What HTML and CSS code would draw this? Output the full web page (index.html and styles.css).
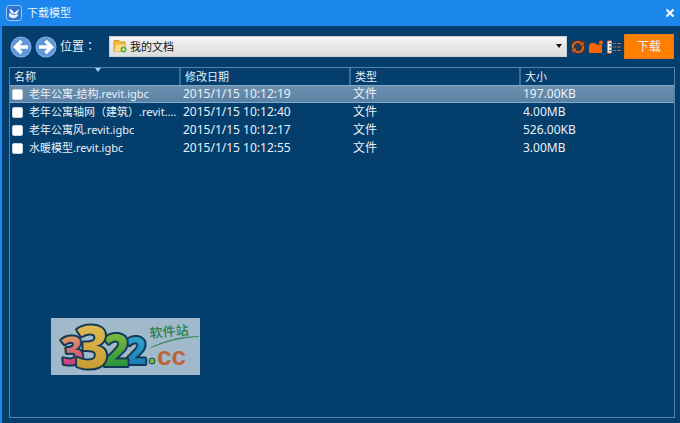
FILE: index.html
```html
<!DOCTYPE html>
<html lang="zh-CN">
<head>
<meta charset="utf-8">
<title>下载模型</title>
<link rel="stylesheet" href="styles.css">
</head>
<body>
<div class="window">
  <header class="titlebar">
    <svg class="app-icon" viewBox="0 0 16 16" aria-hidden="true">
      <rect x=".5" y=".5" width="15" height="15" rx="3" fill="#2f74cc" stroke="#9cc9f5"/>
      <path d="M3 3.500l3.500 2L8 8l5.500-4-3 5.500L5 8z" fill="#fff"/>
      <path d="M3 8l5 2 4.500-.5c-1 4-7.500 5-9.500 1.500z" fill="#e6f2fd"/>
    </svg>
    <h1 class="title">下载模型</h1>
    <button class="close" type="button" aria-label="关闭">
      <svg viewBox="0 0 10 10"><path d="M1.500 1.500l7 7M8.500 1.500l-7 7" stroke="#fff" stroke-width="2"/></svg>
    </button>
  </header>

  <main class="content">
    <div class="toolbar">
      <button class="nav" type="button" aria-label="后退">
        <svg viewBox="0 0 22 22"><circle cx="11" cy="11" r="10.500" fill="#7fb0e6"/><circle cx="11" cy="11" r="9.500" fill="#5f97d8"/><path d="M18 11H6M11.500 5l-6 6 6 6" fill="none" stroke="#fff" stroke-width="3.500"/></svg>
      </button>
      <button class="nav" type="button" aria-label="前进">
        <svg viewBox="0 0 22 22"><circle cx="11" cy="11" r="10.500" fill="#7fb0e6"/><circle cx="11" cy="11" r="9.500" fill="#5f97d8"/><path d="M4 11H16M10.500 5l6 6-6 6" fill="none" stroke="#fff" stroke-width="3.500"/></svg>
      </button>
      <label class="location-label" for="location">位置<span lang="zh-TW">：</span></label>
      <div class="location">
        <select id="location" class="location-select"><option>我的文档</option></select>
        <svg class="folder" viewBox="0 0 14 14" aria-hidden="true">
          <path d="M1 1.500h5l1 1.500h5v9H1z" fill="#f0b93f" stroke="#d4962a"/>
          <path d="M3 5.500h9l-1.500 6.500H1.500z" fill="#fbdc84"/>
          <circle cx="10.500" cy="10.500" r="3" fill="#5cae3c"/>
          <path d="M9 10.500h3M10.500 9v3" stroke="#dff5d2"/>
        </svg>
        <svg class="arrow" viewBox="0 0 6 4" aria-hidden="true"><path d="M0 0h6L3 4z" fill="#111"/></svg>
      </div>
      <div class="tools">
        <button class="tool" type="button" aria-label="刷新">
          <svg viewBox="0 0 14 14"><rect width="14" height="14" fill="#30384e"/><path d="M2 8A5 5 0 0 1 10.500 3.500M12 6A5 5 0 0 1 3.500 10.500" fill="none" stroke="#f26508" stroke-width="1.800"/><path d="M12.500 1.500V5.500H8.500zM1.500 12.500v-4h4z" fill="#f26508"/></svg>
        </button>
        <button class="tool" type="button" aria-label="新建文件夹">
          <svg viewBox="0 0 14 14"><path d="M0 5l2-2h4l1.500 1.500H13V13H0z" fill="#f96400"/><circle cx="12" cy="2.500" r="2" fill="#f96400"/></svg>
        </button>
        <button class="tool" type="button" aria-label="列表视图">
          <svg viewBox="0 0 14 14"><path d="M.5 1h4v12h-4z" fill="#fff1e4" stroke="#f28032"/><path d="M2 3h2v1H2zM2 6.500h2v1H2zM2 10h2v1H2z" fill="#174f80"/><path d="M6 3.500h3m1 0h4M6 7h3m1 0h4M6 10.500h3m1 0h4" stroke="#d4652a" stroke-width="1.200"/></svg>
        </button>
      </div>
      <button class="download" type="button">下载</button>
    </div>

    <section class="panel">
      <table class="files">
        <thead>
          <tr><th scope="col">名称<svg class="sort" viewBox="0 0 6 4" aria-hidden="true"><path d="M0 0h6L3 4z" fill="#9bd0ee"/></svg></th><th scope="col">修改日期</th><th scope="col">类型</th><th scope="col">大小</th></tr>
        </thead>
        <tbody>
          <tr class="selected"><td><label class="file"><input type="checkbox"><span class="name">老年公寓-结构.revit.igbc</span></label></td><td>2015/1/15 10:12:19</td><td>文件</td><td>197.00KB</td></tr>
          <tr><td><label class="file"><input type="checkbox"><span class="name">老年公寓轴网（建筑）.revit.igbc</span></label></td><td>2015/1/15 10:12:40</td><td>文件</td><td>4.00MB</td></tr>
          <tr><td><label class="file"><input type="checkbox"><span class="name">老年公寓风.revit.igbc</span></label></td><td>2015/1/15 10:12:17</td><td>文件</td><td>526.00KB</td></tr>
          <tr><td><label class="file"><input type="checkbox"><span class="name">水暖模型.revit.igbc</span></label></td><td>2015/1/15 10:12:55</td><td>文件</td><td>3.00MB</td></tr>
        </tbody>
      </table>
    </section>
  </main>

  <svg class="watermark" viewBox="0 0 149 57" role="img" aria-label="3322.cc 软件站">
    <defs>
      <linearGradient id="pink" x1="0" y1="0" x2="0" y2="1"><stop offset=".3" stop-color="#dc9464"/><stop offset=".8" stop-color="#c83c86"/></linearGradient>
      <linearGradient id="gold" x1="0" y1="0" x2="0" y2="1"><stop offset=".2" stop-color="#dfbc55"/><stop offset=".8" stop-color="#c99c32"/></linearGradient>
      <linearGradient id="green" x1="0" y1="0" x2="0" y2="1"><stop offset=".2" stop-color="#86bd40"/><stop offset=".9" stop-color="#188c3c"/></linearGradient>
      <linearGradient id="blue" x1="0" y1="0" x2="0" y2="1"><stop offset=".2" stop-color="#35a7cf"/><stop offset=".9" stop-color="#1676b4"/></linearGradient>
    </defs>
    <rect width="149" height="57" fill="#a0b9cb"/>
    <g class="digits">
      <text x="74" y="46" font-size="37" fill="url(#blue)">2</text>
      <text x="52" y="48" font-size="45" fill="url(#green)">2</text>
      <text x="10" y="46" font-size="38" fill="url(#pink)" transform="rotate(-6 20 32)">3</text>
      <text x="24" y="50" font-size="58" fill="url(#gold)">3</text>
    </g>
    <circle cx="101" cy="43" r="3" fill="#72b83e" stroke="#17415b"/>
    <text class="domain" x="106" y="47">cc</text>
    <text class="station" x="99" y="20" transform="rotate(-5 99 20)">软件站</text>
    <path d="M100 29.500Q123 18 148 18.500 124 19.500 100 29.500z" fill="#2b8450" stroke="#2b8450" stroke-width=".5"/>
  </svg>
</div>
</body>
</html>
```
FILE: styles.css
```css
* { box-sizing: border-box; }

body {
  margin: 0;
  background: #043e6c;
  color: #e8f1f8;
  font: 12px/18px "Noto Sans", "Noto Sans CJK SC", sans-serif;
}

button {
  padding: 0;
  border: 0;
  background: none;
  color: inherit;
  font: inherit;
}

button svg { display: block; width: 100%; height: 100%; }

.window {
  position: relative;
  display: flex;
  flex-direction: column;
  min-height: 100vh;
  border: solid #1b87ed;
  border-width: 0 0 0 2px;
}

.titlebar {
  display: flex;
  align-items: center;
  gap: 5px;
  height: 26px;
  padding: 0 5px 0 4px;
  background: #1b87ed;
}

.app-icon { width: 16px; height: 16px; }

.title {
  flex: 1;
  margin: 0;
  font-size: 11px;
  font-weight: 400;
}

.close { width: 10px; height: 10px; }

.content {
  flex: 1;
  display: flex;
  flex-direction: column;
  gap: 8px;
  padding: 8px 5px 5px 7px;
}

.toolbar {
  display: flex;
  align-items: center;
  height: 25px;
  padding: 0 1px;
}

.nav { width: 22px; height: 22px; margin-right: 3px; }

.location-label { width: 49px; }

.location-label span { font-family: "Noto Sans CJK TC", sans-serif; }

.location { position: relative; flex: 1; }

.location-select {
  display: block;
  width: 100%;
  height: 21px;
  padding: 0 20px;
  border: 1px solid #c9d0d6;
  border-radius: 0;
  appearance: none;
  background: linear-gradient(#f4f4f4, #dcdcdc);
  color: #111;
  font: inherit;
  font-size: 11px;
}

.folder { position: absolute; left: 4px; top: 3px; width: 14px; height: 14px; pointer-events: none; }

.arrow { position: absolute; right: 5px; top: 8px; width: 6px; height: 4px; pointer-events: none; }

.tools { display: flex; gap: 4px; margin: 0 3px 0 4px; }

.tool { width: 14px; height: 14px; }

.download {
  width: 50px;
  height: 25px;
  border: 1px solid #e07a17;
  background: #ff8000;
}

.panel { flex: 1; border: 1px solid #5684a6; }

.files {
  width: 100%;
  table-layout: fixed;
  border-collapse: separate;
  border-spacing: 0;
}

.files th {
  position: relative;
  width: 171px;
  height: 17px;
  padding: 0 4px;
  border-right: 2px solid #406e93;
  font-size: 11px;
  font-weight: 400;
  line-height: 16px;
  text-align: left;
}

.files th:nth-child(n + 2) { width: 170px; }

.files th:last-child { width: auto; border-right: 0; }

.sort { position: absolute; left: 50%; top: 0; width: 6px; height: 4px; }

.files td { height: 18px; padding: 0 2px; line-height: 16px; white-space: nowrap; }

.selected td {
  border: solid #84a9cb;
  border-width: 1px 0;
  background: linear-gradient(#6c8fae, #5b82a6);
}

.file { display: flex; align-items: center; gap: 6px; font-size: 11px; }

.file input {
  flex: none;
  width: 11px;
  height: 11px;
  margin: 0;
  border: 1px solid #c5d5e2;
  border-radius: 2px;
  appearance: none;
  background: #fff;
}

.name { overflow: hidden; text-overflow: ellipsis; }

.watermark { position: absolute; left: 49px; top: 318px; width: 149px; height: 57px; }

.digits text {
  font-family: "Noto Sans", sans-serif;
  font-weight: 800;
  stroke: #123a56;
  stroke-width: 4px;
  stroke-linejoin: round;
  paint-order: stroke;
}

.domain { fill: #bd6537; font: 700 26px "Liberation Sans", sans-serif; }

.station { fill: #287f4b; font: 500 13px "Noto Sans CJK SC", sans-serif; }
```
